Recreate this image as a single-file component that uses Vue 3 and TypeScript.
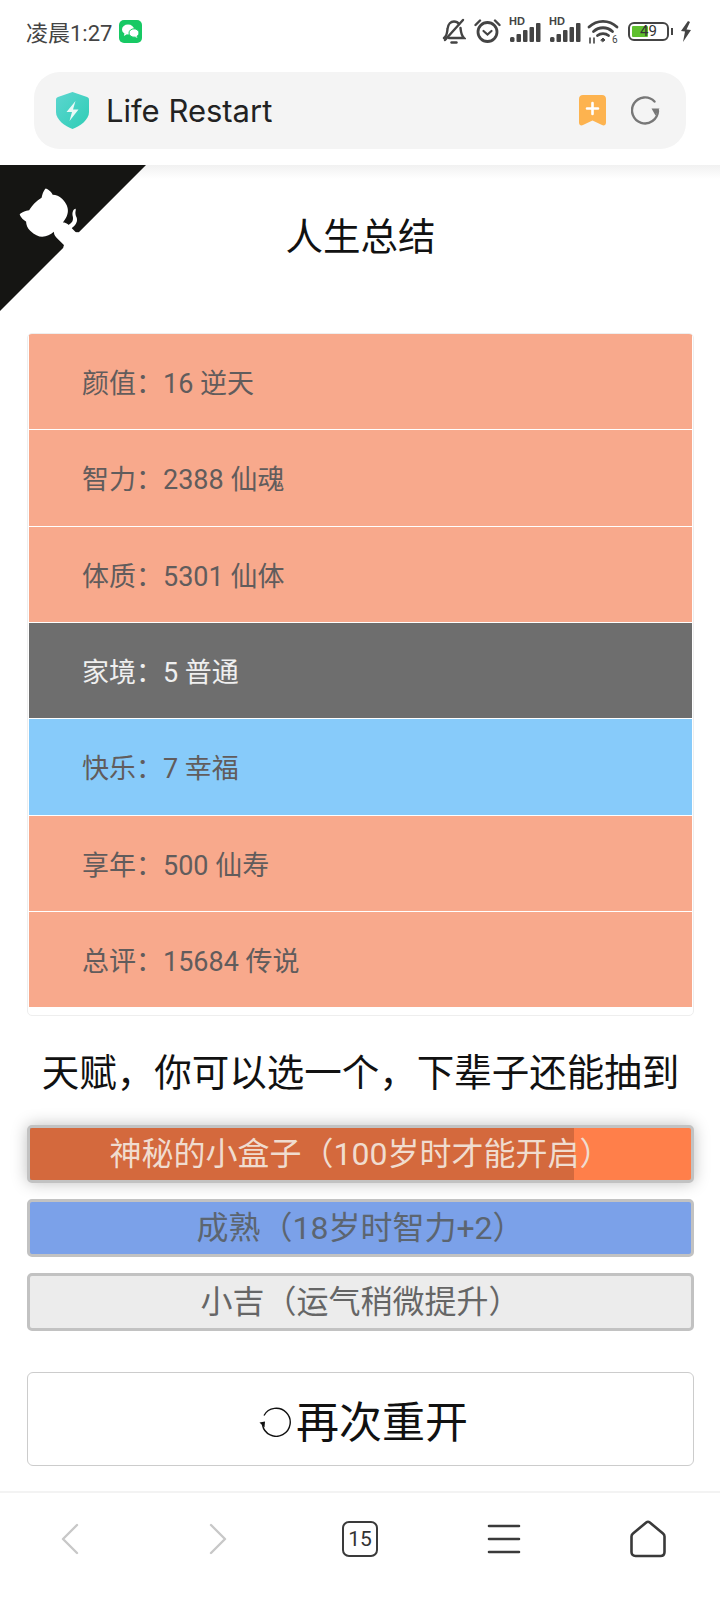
<template>
  <div class="phone">
    <!-- status bar -->
    <div class="status-bar">
      <div class="status-left">
        <span class="clock">凌晨1:27</span>
        <span class="wechat">
          <svg width="23" height="23" viewBox="0 0 23 23">
            <rect width="23" height="23" rx="5" fill="#17c964" />
            <ellipse cx="9" cy="9.500" rx="6" ry="5" fill="#fff" />
            <path d="M5.500 13l-.6 3 3-1.800z" fill="#fff" />
            <ellipse cx="15" cy="13" rx="5" ry="4.200" fill="#fff" stroke="#17c964" stroke-width="1" />
            <path d="M17.500 16l1 2-2.800-1.200z" fill="#fff" />
          </svg>
        </span>
      </div>
      <div class="status-right">
        <svg class="bell" width="24" height="26" viewBox="0 0 24 26" fill="none" stroke="#444" stroke-width="2.400" stroke-linecap="round">
          <path d="M2 20c3-2 3-5 3.500-9C6 6 9 3.500 12 3.500c2.500 0 4 1 5 2.500M18.500 10c.5 4 .5 7 3.500 10H7" />
          <path d="M3 22L21 2" />
          <path d="M9.500 24.500h5" stroke-width="2.400" />
        </svg>
        <svg class="alarm" width="27" height="26" viewBox="0 0 27 26" fill="none" stroke="#444" stroke-width="2.800" stroke-linecap="round">
          <circle cx="13.500" cy="14" r="9.500" />
          <path d="M9.500 13l4 3.500 4-3.500" stroke-width="2.200" />
          <path d="M1.500 7L6 2.500M25.500 7L21 2.500" stroke-width="2.400" />
        </svg>
        <span class="signal" v-for="n in 2" :key="n">
          <span class="hd">HD</span>
          <svg width="33" height="20" viewBox="0 0 33 20" fill="#444">
            <rect x="1" y="15" width="4.500" height="5" rx="1.500" />
            <rect x="7.500" y="12" width="4.500" height="8" rx="1" />
            <rect x="14" y="8" width="4.500" height="12" rx="1" />
            <rect x="20.500" y="5" width="4.500" height="15" rx="1" />
            <rect x="27" y="1" width="4.500" height="19" rx="1" />
          </svg>
        </span>
        <svg class="wifi" width="32" height="26" viewBox="0 0 32 26" fill="none" stroke="#444" stroke-width="2.800" stroke-linecap="round">
          <path d="M2 9c8-7.500 20-7.500 28 0" />
          <path d="M6.500 13.500c5.500-5 13.500-5 19 0" />
          <path d="M10.500 17.500c3-2.500 8-2.500 11 0" />
          <path d="M14 22l2-2 2 2-2 1.500z" fill="#444" stroke-width="1" />
          <path d="M3 20v5M7 20v5" stroke-width="1.600" />
          <text x="25" y="25" font-size="10" fill="#444" stroke="none" font-family="Roboto, sans-serif">6</text>
        </svg>
        <span class="battery">
          <span class="battery-body">
            <span class="battery-fill" :style="{ width: batteryLevel + '%' }"></span>
            <span class="battery-num">{{ batteryLevel }}</span>
          </span>
          <span class="battery-cap"></span>
        </span>
        <svg width="12" height="21" viewBox="0 0 12 21" fill="#444">
          <path d="M8 0L1 10l4 .5L3 21l8-12-4.500-.5L10 1z" />
        </svg>
      </div>
    </div>

    <!-- browser url bar -->
    <div class="browser-head">
      <div class="url-bar">
        <svg width="33" height="37" viewBox="0 0 33 37">
          <defs>
            <linearGradient id="shield" x1="0" y1="0" x2="1" y2="1">
              <stop offset="0" stop-color="#5cd6d0" />
              <stop offset="1" stop-color="#2ecdb5" />
            </linearGradient>
          </defs>
          <path d="M16.500 0L31 5c1.300.5 2 1.400 2 2.800V20c0 8-9 14-16.500 17C9 34 0 28 0 20V7.800C0 6.400.7 5.500 2 5z" fill="url(#shield)" />
          <path d="M19.500 9l-9 11h5.500l-2.500 9 9-11.500h-5.500z" fill="#eafaf7" />
        </svg>
        <span class="url-text">Life Restart</span>
        <span class="url-spacer"></span>
        <svg width="27" height="31" viewBox="0 0 27 31">
          <path d="M4 0h19c2.500 0 4 1.500 4 4v23.500c0 2.500-2 3.500-4 2.500l-9.500-4.500L4 30c-2 1-4 0-4-2.500V4C0 1.500 1.500 0 4 0z" fill="#fdb34f" />
          <path d="M13.500 8v11M8 13.500h11" stroke="#fff" stroke-width="2.600" stroke-linecap="round" />
        </svg>
        <svg class="reload" width="29" height="29" viewBox="0 0 29 29" fill="none">
          <path d="M23.500 5.500A13 13 0 1 0 27 15" stroke="#777" stroke-width="2.400" stroke-linecap="round" />
          <path d="M28.500 12.500h-8l4 7z" fill="#777" />
        </svg>
      </div>
    </div>

    <!-- page -->
    <div class="page">
      <a class="github-corner" aria-label="GitHub">
        <svg width="146" height="146" viewBox="0 0 250 250">
          <g transform="translate(250,0) scale(-1,1)">
            <path d="M0,0 L115,115 L130,115 L142,142 L250,250 L250,0 Z" fill="#151513" />
            <path d="M128.3,109.0 C113.8,99.7 119.0,89.6 119.0,89.6 C122.0,82.7 120.5,78.6 120.5,78.6 C119.2,72.0 123.4,76.3 123.4,76.3 C127.3,80.9 125.5,87.3 125.5,87.3 C122.9,97.6 130.6,101.9 134.4,103.2" fill="#fff" />
            <path d="M115.0,115.0 C114.9,115.1 118.7,116.5 119.8,115.4 L133.7,101.6 C136.9,99.2 139.9,98.4 142.2,98.6 C133.8,88.0 127.5,74.4 143.8,58.0 C148.5,53.4 154.0,51.2 159.7,51.0 C160.3,49.4 163.2,43.6 171.4,40.1 C171.4,40.1 176.1,42.5 178.8,56.2 C183.1,58.6 187.2,61.8 190.9,65.4 C194.5,69.0 197.7,73.2 200.1,77.6 C213.8,80.2 216.3,84.9 216.3,84.9 C212.7,93.1 206.9,96.0 205.4,96.6 C205.1,102.4 203.0,107.8 198.3,112.5 C181.9,128.9 168.3,122.5 157.7,114.1 C157.9,116.9 156.7,120.9 152.7,124.9 L141.0,136.5 C139.8,137.7 141.6,141.9 141.8,141.8 Z" fill="#fff" />
          </g>
        </svg>
      </a>

      <h1 class="title">人生总结</h1>

      <ul class="summary">
        <li v-for="row in summary" :key="row.label" class="summary-row" :class="`grade-${row.grade}`">
          {{ row.label }}：{{ row.value }} {{ row.judge }}
        </li>
      </ul>

      <h2 class="talent-title">天赋，你可以选一个，下辈子还能抽到</h2>

      <ul class="talents">
        <li v-for="t in talents" :key="t.text" class="talent" :class="[`talent-${t.grade}`, { selected: t.selected }]">
          <span v-if="t.progress" class="talent-progress" :style="{ width: t.progress + '%' }"></span>
          <span class="talent-text">{{ t.text }}</span>
        </li>
      </ul>

      <button class="restart">
        <svg width="33" height="30" viewBox="0 0 33 30" fill="none" class="restart-icon">
          <path d="M5 8.500A14 14 0 1 1 3.500 18" stroke="#111" stroke-width="1.400" />
          <path d="M0.500 15.500l5 5 0.500-6z" fill="#111" />
        </svg>
        <span>再次重开</span>
      </button>
    </div>

    <!-- browser nav -->
    <nav class="nav">
      <svg class="nav-back" width="18" height="32" viewBox="0 0 18 32" fill="none" stroke="#c8c8c8" stroke-width="2.400" stroke-linecap="round" stroke-linejoin="round">
        <path d="M16 2L2 16l14 14" />
      </svg>
      <svg class="nav-forward" width="18" height="32" viewBox="0 0 18 32" fill="none" stroke="#c8c8c8" stroke-width="2.400" stroke-linecap="round" stroke-linejoin="round">
        <path d="M2 2l14 14L2 30" />
      </svg>
      <span class="tabs">15</span>
      <svg width="36" height="30" viewBox="0 0 36 30" fill="none" stroke="#3a3a3a" stroke-width="2.600" stroke-linecap="round">
        <path d="M3 2h30M3 15h30M3 28h30" />
      </svg>
      <svg width="38" height="38" viewBox="0 0 38 38" fill="none" stroke="#3a3a3a" stroke-width="2.600" stroke-linejoin="round">
        <path d="M17.200 2.500c1.200-1 2.400-1 3.600 0l13.200 11c1 .8 1.500 1.800 1.500 3V32c0 2.500-1.500 4-4 4H6.500c-2.500 0-4-1.500-4-4V16.500c0-1.200.5-2.200 1.500-3z" />
      </svg>
    </nav>
  </div>
</template>

<script setup lang="ts">
interface SummaryRow {
  label: string
  value: number
  judge: string
  grade: number
}

interface Talent {
  text: string
  grade: number
  selected?: boolean
  progress?: number
}

const batteryLevel = 49

const summary: SummaryRow[] = [
  { label: '颜值', value: 16, judge: '逆天', grade: 3 },
  { label: '智力', value: 2388, judge: '仙魂', grade: 3 },
  { label: '体质', value: 5301, judge: '仙体', grade: 3 },
  { label: '家境', value: 5, judge: '普通', grade: 0 },
  { label: '快乐', value: 7, judge: '幸福', grade: 1 },
  { label: '享年', value: 500, judge: '仙寿', grade: 3 },
  { label: '总评', value: 15684, judge: '传说', grade: 3 }
]

const talents: Talent[] = [
  { text: '神秘的小盒子（100岁时才能开启）', grade: 3, selected: true, progress: 82.3 },
  { text: '成熟（18岁时智力+2）', grade: 1 },
  { text: '小吉（运气稍微提升）', grade: 0 }
]
</script>

<style>
html,
body {
  margin: 0;
  background: #fff;
}
</style>

<style scoped>
.phone {
  width: 720px;
  height: 1600px;
  display: flex;
  flex-direction: column;
  overflow: hidden;
  font-family: Roboto, "Noto Sans CJK SC", sans-serif;
  background: #fff;
}

.status-bar {
  height: 62px;
  flex-shrink: 0;
  display: flex;
  align-items: center;
  justify-content: space-between;
  padding: 0 28px 0 26px;
}

.status-left {
  display: flex;
  align-items: center;
  gap: 7px;
}

.clock {
  font-size: 22px;
  color: #444;
}

.wechat {
  display: flex;
}

.status-right {
  display: flex;
  align-items: center;
  gap: 7px;
}

.bell,
.alarm {
  margin-right: 1px;
}

.wifi {
  margin-left: -2px;
  margin-right: 2px;
}

.signal {
  position: relative;
  display: flex;
  padding-top: 2px;
}

.hd {
  position: absolute;
  left: 0;
  top: -5px;
  font-size: 11px;
  line-height: 12px;
  font-weight: 700;
  color: #444;
  font-family: "Liberation Sans", sans-serif;
}

.battery {
  display: flex;
  align-items: center;
  gap: 2px;
}

.battery-body {
  position: relative;
  width: 41px;
  height: 19px;
  box-sizing: border-box;
  border: 2.500px solid #444;
  border-radius: 6px;
  padding: 2px;
  display: flex;
}

.battery-fill {
  display: block;
  height: 100%;
  background: #5fc02e;
  border-radius: 1px;
}

.battery-num {
  position: absolute;
  left: 0;
  right: 0;
  top: -2px;
  text-align: center;
  font-size: 15px;
  line-height: 18px;
  color: #333;
}

.battery-cap {
  width: 2px;
  height: 7px;
  background: #444;
}

.browser-head {
  height: 103px;
  flex-shrink: 0;
  box-sizing: border-box;
  padding: 10px 34px 16px;
}

.url-bar {
  height: 77px;
  box-sizing: border-box;
  background: #f4f4f4;
  border-radius: 26px;
  display: flex;
  align-items: center;
  padding: 0 26px 0 22px;
}

.url-text {
  margin-left: 17px;
  font-family: Inter, sans-serif;
  font-size: 31px;
  color: #222;
}

.url-spacer {
  flex: 1;
}

.reload {
  margin-left: 25px;
}

.page {
  position: relative;
  flex: 1;
  min-height: 0;
  box-sizing: border-box;
  padding: 0 26px 0 27px;
  background: linear-gradient(#f1f1f1, #fff 14px);
}

.github-corner {
  position: absolute;
  left: 0;
  top: 0;
  display: block;
  line-height: 0;
}

.title {
  margin: 0;
  padding-top: 47px;
  height: 168px;
  box-sizing: border-box;
  text-align: center;
  font-size: 37.500px;
  line-height: 50px;
  font-weight: 400;
  color: #111;
}

.summary {
  list-style: none;
  margin: 0;
  padding: 0 1px 7px 1px;
  border: 1px solid #eee;
  border-radius: 5px;
  background: #fff;
  overflow: hidden;
}

.summary-row {
  height: 96.330px;
  box-sizing: border-box;
  border-bottom: 1px solid #fff;
  padding-left: 53px;
  display: flex;
  align-items: center;
  font-size: 27px;
  color: #615c5c;
  white-space: pre-wrap;
}

.grade-3 {
  background: #f8a98c;
}

.grade-1 {
  background: #87cbfa;
}

.grade-0 {
  background: #6e6e6e;
  color: #efefef;
}

.talent-title {
  margin: 0;
  padding-top: 31px;
  height: 109px;
  box-sizing: border-box;
  text-align: center;
  font-size: 37.500px;
  line-height: 52px;
  font-weight: 400;
  color: #111;
  white-space: nowrap;
}

.talents {
  list-style: none;
  margin: 0;
  padding: 0;
  display: flex;
  flex-direction: column;
  gap: 16px;
}

.talent {
  position: relative;
  height: 58px;
  box-sizing: border-box;
  border: 3px solid #c2c2c2;
  border-radius: 5px;
  padding-bottom: 6px;
  display: flex;
  align-items: center;
  justify-content: center;
  overflow: hidden;
  font-size: 32px;
}

.talent-3 {
  background: #ff7f4a;
  color: #f0dccf;
}

.talent-1 {
  background: #7ba1e9;
  color: #5c6570;
}

.talent-0 {
  background: #ececec;
  color: #666;
}

.talent.selected {
  box-shadow: 0 0 16px rgba(0, 0, 0, 0.25);
  overflow: visible;
}

.talent-progress {
  position: absolute;
  left: 0;
  top: 0;
  bottom: 0;
  background: rgba(0, 0, 0, 0.17);
}

.talent-text {
  position: relative;
}

.restart {
  margin-top: 41px;
  width: 100%;
  height: 94px;
  display: flex;
  align-items: center;
  justify-content: center;
  background: #fff;
  border: 1.500px solid #ccc;
  border-radius: 6px;
  font-family: inherit;
  font-size: 43px;
  color: #111;
  padding: 0 0 0 6px;
}

.restart-icon {
  margin-right: 4px;
  margin-top: 6px;
}

.nav {
  height: 109px;
  flex-shrink: 0;
  box-sizing: border-box;
  border-top: 2px solid #f3f3f3;
  display: grid;
  grid-template-columns: repeat(5, 144px);
  align-items: center;
  justify-items: center;
  padding-bottom: 16px;
}

.nav-back {
  margin-right: 4px;
}

.nav-forward {
  margin-left: 4px;
}

.tabs {
  width: 36px;
  height: 36px;
  box-sizing: border-box;
  border: 2.600px solid #3a3a3a;
  border-radius: 7px;
  display: flex;
  align-items: center;
  justify-content: center;
  font-size: 21px;
  color: #333;
}
</style>
